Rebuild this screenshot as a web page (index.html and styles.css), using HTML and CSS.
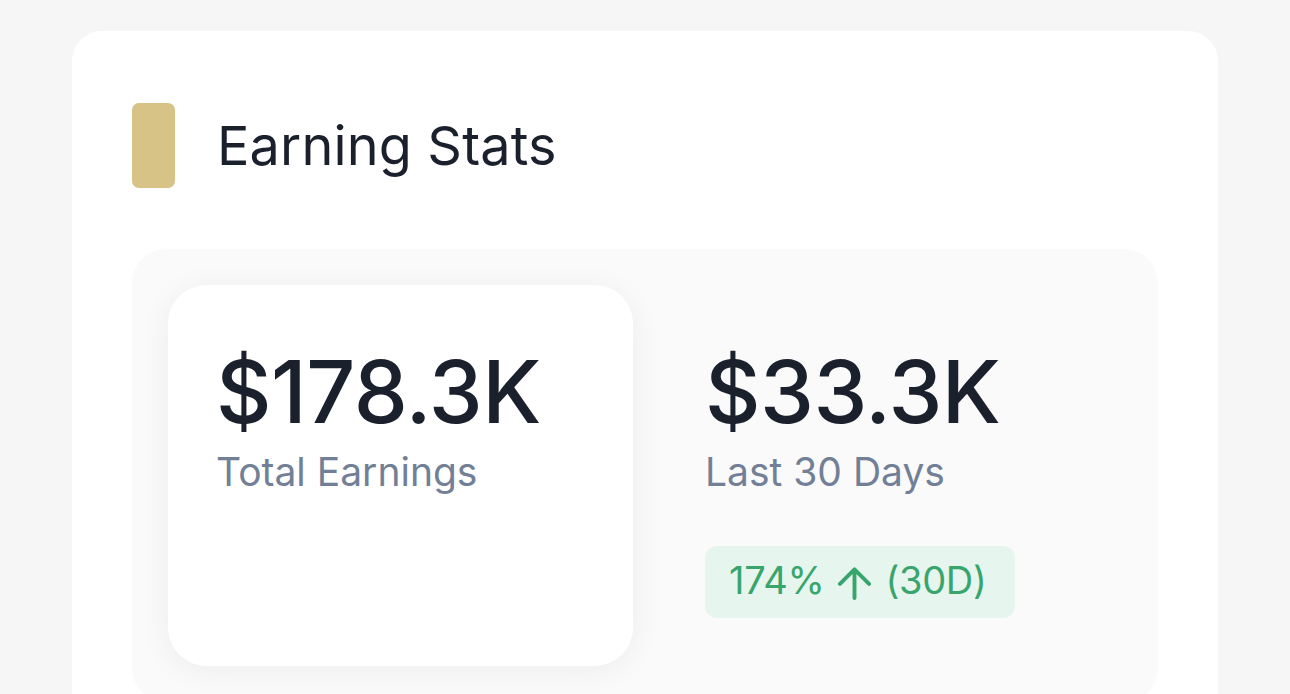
FILE: index.html
```html
<!DOCTYPE html>
<html lang="en">
<head>
<meta charset="utf-8">
<title>Earning Stats</title>
<link rel="stylesheet" href="styles.css">
</head>
<body>
  <main class="page">
    <section class="card">
      <header class="card-header">
        <span class="accent"></span>
        <h2 class="title">Earning Stats</h2>
      </header>
      <div class="panel">
        <div class="stat stat--active">
          <div class="stat-value">$178.3K</div>
          <div class="stat-label">Total Earnings</div>
        </div>
        <div class="stat">
          <div class="stat-value">$33.3K</div>
          <div class="stat-label">Last 30 Days</div>
          <div class="badge">
            <span>174%</span>
            <svg class="badge-icon" viewBox="0 0 36 34" aria-hidden="true">
              <path d="M18 32V3M3 17.5L18 2.5L33 17.5" fill="none" stroke="currentColor" stroke-width="4" stroke-linecap="round" stroke-linejoin="round"/>
            </svg>
            <span>(30D)</span>
          </div>
        </div>
      </div>
    </section>
  </main>
</body>
</html>
```

FILE: styles.css
```css
html, body {
  margin: 0;
  padding: 0;
}

body {
  background: #f6f6f6;
  font-family: Inter, "Noto Sans", "Liberation Sans", sans-serif;
  color: #1a202c;
  overflow: hidden;
  height: 694px;
}

.page {
  padding: 31px 72px 0 72px;
}

.card {
  background: #ffffff;
  border-radius: 30px;
  padding: 72px 60px 60px 60px;
  min-height: 800px;
  box-sizing: border-box;
}

.card-header {
  display: flex;
  align-items: center;
  gap: 42px;
  height: 85px;
}

.accent {
  width: 43px;
  height: 85px;
  border-radius: 7px;
  background: #d7c386;
  flex: none;
}

.title {
  margin: 0;
  font-size: 54px;
  font-weight: 400;
  line-height: 1;
  color: #1a202c;
  letter-spacing: 0.15px;
}

.panel {
  margin-top: 61px;
  background: #fafafa;
  border-radius: 34px;
  padding: 36px;
  display: grid;
  grid-template-columns: 465px 465px;
  column-gap: 24px;
}

.stat {
  padding: 55px 48px 48px 48px;
  min-height: 380px;
  box-sizing: border-box;
  border-radius: 38px;
}

.stat--active {
  background: #ffffff;
  box-shadow: 0 4px 30px rgba(0, 0, 0, 0.06);
}

.stat-value {
  font-size: 86px;
  line-height: 104px;
  font-weight: 500;
  letter-spacing: -0.5px;
  color: #1a202c;
}

.stat-label {
  font-size: 39px;
  line-height: 56px;
  color: #718096;
}

.badge {
  margin-top: 46px;
  display: inline-flex;
  align-items: center;
  gap: 13px;
  height: 72px;
  box-sizing: border-box;
  padding: 0 28px 5px 24px;
  border-radius: 12px;
  background: #e6f5ed;
  color: #38a56d;
  font-size: 38px;
  line-height: 48px;
  letter-spacing: -0.3px;
}

.badge-icon {
  width: 35px;
  height: 33px;
  margin-top: 7px;
}
```
